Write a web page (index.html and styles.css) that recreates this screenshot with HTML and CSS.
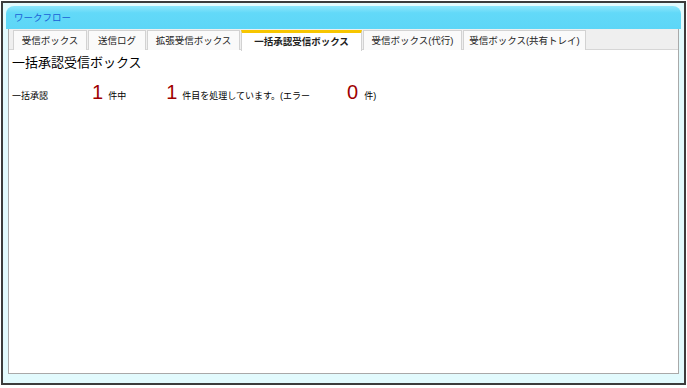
FILE: index.html
```html
<!DOCTYPE html>
<html lang="ja">

<head>
    <meta charset="utf-8">
    <title>ワークフロー</title>
    <link rel="stylesheet" href="styles.css">
</head>

<body>
    <!-- moldura externa -->
    <div class="moldura">
        <div class="barra-titulo">ワークフロー</div>

        <div class="painel">
            <div class="conteudo">
                <!-- abas -->
                <ul class="abas">
                    <li class="aba aba-1">受信ボックス</li>
                    <li class="aba aba-2">送信ログ</li>
                    <li class="aba aba-3">拡張受信ボックス</li>
                    <li class="aba aba-4 ativa">一括承認受信ボックス</li>
                    <li class="aba aba-5">受信ボックス(代行)</li>
                    <li class="aba aba-6">受信ボックス(共有トレイ)</li>
                </ul>

                <h2 class="titulo">一括承認受信ボックス</h2>
                <p class="progresso">
                    <span class="rotulo">一括承認</span>
                    <span class="numero n-total">1</span>
                    <span class="texto">件中</span>
                    <span class="numero n-atual">1</span>
                    <span class="texto">件目を処理しています。(エラー</span>
                    <span class="numero n-erro">0</span>
                    <span class="texto">件)</span>
                </p>
            </div>
        </div>
    </div>
</body>

</html>
```

FILE: styles.css
```css
* {
    padding: 0;
    margin: 0;
    box-sizing: border-box;
}

body {
    background-color: #ffffff;
    font-family: "Liberation Sans", "Noto Sans CJK JP", sans-serif;
    color: #000000;
}

.moldura {
    margin: 1px;
    width: 685px;
    height: 384px;
    border: 2px solid #3c3c3c;
    background-color: #e2fafd;
    padding: 3px 3px 0 3px;
}

.barra-titulo {
    height: 23px;
    border-radius: 8px 8px 0 0;
    background: linear-gradient(#8ee6fb, #62d9f8 30%, #5dd6f7);
    color: #1a5fd6;
    font-size: 9.5px;
    line-height: 23px;
    padding-left: 8px;
}

.painel {
    padding: 0 2px;
}

.conteudo {
    height: 345px;
    border: 1px solid #a9a9a9;
    border-top: none;
    background-color: #ffffff;
}

.abas {
    list-style: none;
    display: flex;
    height: 21px;
    padding: 1px 0 0 4px;
    background-color: #efefef;
    border-bottom: 1px solid #d6d6d6;
}

.aba {
    height: 20px;
    border: 1px solid #d2d2d2;
    border-bottom: none;
    background-color: #fafafa;
    font-size: 9.5px;
    line-height: 19px;
    text-align: center;
    color: #222222;
    margin-right: 1px;
}

.aba-1 { width: 74px; }
.aba-2 { width: 58px; }
.aba-3 { width: 93px; }
.aba-4 { width: 121px; }
.aba-5 { width: 99px; }
.aba-6 { width: 123px; }

.aba.ativa {
    background-color: #ffffff;
    border-top: 3px solid #f7c600;
    font-weight: bold;
    line-height: 17px;
    height: 21px;
    margin-bottom: -1px;
}

.titulo {
    font-size: 13px;
    font-weight: normal;
    line-height: 16px;
    padding: 5px 0 0 3px;
}

.progresso {
    display: flex;
    align-items: baseline;
    padding: 10px 0 0 3px;
    font-size: 9px;
}

.numero {
    font-size: 20px;
    color: #a00000;
    margin-right: 5px;
}

.n-total { margin-left: 44px; }
.n-atual { margin-left: 40px; }
.n-erro { margin-left: 37px; margin-right: 6px; }
```
